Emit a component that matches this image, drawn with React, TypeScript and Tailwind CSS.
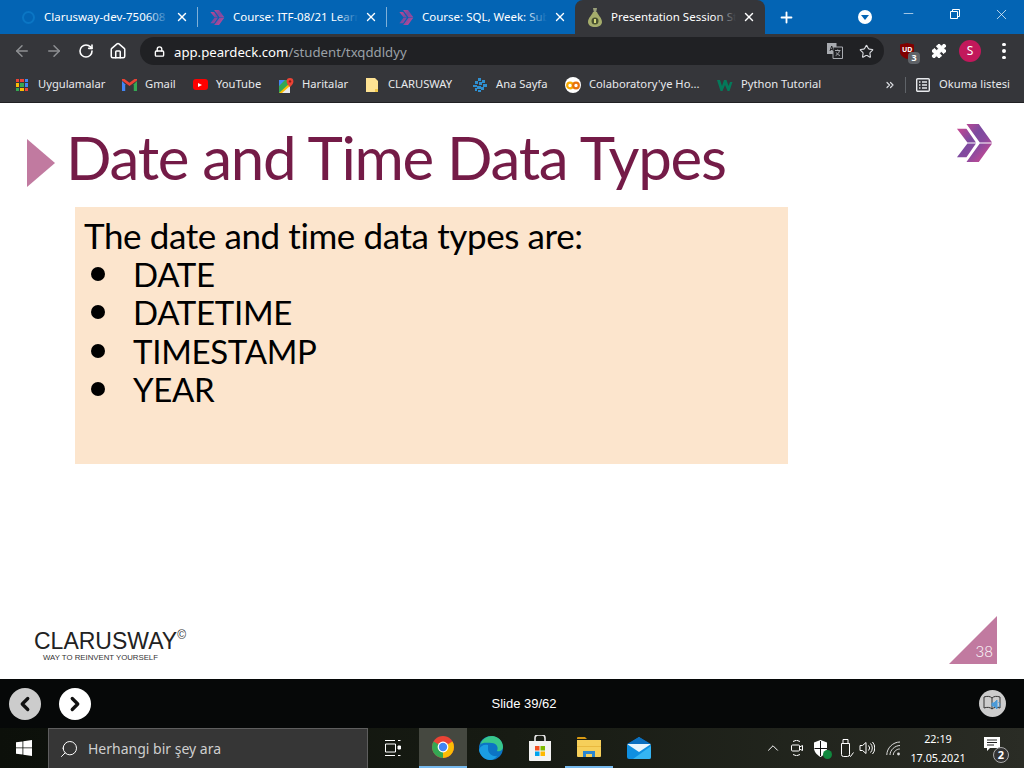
import React from "react";
import { ArrowLeft, ArrowRight, RotateCw, Home, Lock, Star, Puzzle, X, Plus, Minus, ChevronLeft, ChevronRight, ChevronUp, ChevronsRight, Search } from "lucide-react";

const ui = { fontFamily: '"Noto Sans", "Liberation Sans", sans-serif' };

function PeardeckChevron({ size = 16, id }: { size?: number; id: string }) {
  return (
    <svg width={size} height={size} viewBox="0 0 38 40">
      <defs>
        <linearGradient id={id} x1="0" y1="0" x2="1" y2="1">
          <stop offset="0" stopColor="#d6478f" />
          <stop offset="0.4" stopColor="#7b4a9f" />
          <stop offset="0.6" stopColor="#8a4a9f" />
          <stop offset="1" stopColor="#e0488c" />
        </linearGradient>
      </defs>
      <path d="M0 5h10l10 14.500H11z M0 35h10l10-14.500H11z M10 0h13l14 19.500H24z M10 40h13l14-19.500H24z" fill={`url(#${id})`} />
    </svg>
  );
}

function Tab({ title, icon, active, sep }: { title: string; icon: React.ReactNode; active?: boolean; sep?: boolean }) {
  const fade = active ? "to-[#35363a]" : "to-[#0364b4]";
  const box = active ? "-ml-[1px] w-[190px] rounded-t-lg bg-[#35363a] pl-[12px]" : "w-[189px] pl-[11px]";
  return (
    <div className={`relative flex h-[34px] shrink-0 items-center pr-[7px] text-white ${box}`}>
      <div className="flex w-[16px] justify-center">{icon}</div>
      <div className="relative ml-[8px] h-[16px] w-[125px] overflow-hidden whitespace-nowrap text-[11.500px] leading-[16px]">
        {title}
        <div className={`absolute inset-y-0 right-0 w-[22px] bg-linear-to-r from-transparent ${fade}`} />
      </div>
      <X size={14} strokeWidth={2.400} className="ml-[6px] shrink-0" />
      {sep && <div className="absolute right-0 top-[7px] h-[20px] w-px bg-[#7fb0d8]" />}
    </div>
  );
}

function Bookmark({ icon, label, w }: { icon: React.ReactNode; label: string; w: string }) {
  return (
    <div className={`flex shrink-0 items-center ${w}`}>
      <div className="flex w-[16px] shrink-0 justify-center">{icon}</div>
      <span className="ml-[8px] mt-[-2px] whitespace-nowrap text-[11.200px] text-[#e8eaed]">{label}</span>
    </div>
  );
}

function AppsIcon() {
  const c = ["#ea4335", "#ea4335", "#4285f4", "#fbbc05", "#34a853", "#4285f4", "#34a853", "#fbbc05", "#ea4335"];
  return (
    <div className="grid grid-cols-3 gap-[1px]">
      {c.map((x, i) => (
        <div key={i} className="h-[3.600px] w-[3.600px]" style={{ background: x }} />
      ))}
    </div>
  );
}

function GmailIcon() {
  return (
    <svg width="15" height="12" viewBox="0 0 15 12">
      <path d="M0 2v10h3.200V5.200z" fill="#4285f4" />
      <path d="M15 2v10h-3.200V5.200z" fill="#34a853" />
      <path d="M0 1.500 7.500 7 15 1.500V0h-2.500L7.500 3.700 2.500 0H0z" fill="#ea4335" />
    </svg>
  );
}

function YoutubeIcon() {
  return (
    <div className="flex h-[11px] w-[15px] items-center justify-center rounded-[3px] bg-[#f00]">
      <div className="h-0 w-0 border-y-[2.500px] border-l-[4px] border-y-transparent border-l-white" />
    </div>
  );
}

function MapsIcon() {
  return (
    <svg width="15" height="15" viewBox="0 0 15 15">
      <path d="M0 2h11v13H0z" fill="#34a853" />
      <path d="M0 15 11 5v10z" fill="#fbbc05" />
      <path d="M3 15 11 8v7z" fill="#e8eaed" />
      <path d="M0 2h6L0 8z" fill="#4285f4" />
      <path d="M11 0a3.400 3.400 0 0 1 3.400 3.400C14.400 6 11 9 11 9S7.600 6 7.600 3.400A3.400 3.400 0 0 1 11 0z" fill="#ea4335" />
      <circle cx="11" cy="3.400" r="1.200" fill="#8a1c14" />
    </svg>
  );
}

function FolderPage() {
  return (
    <svg width="12" height="14" viewBox="0 0 12 14">
      <path d="M0 0h9l3 3v11H0z" fill="#fde293" />
      <path d="M9 11h3v3H9z" fill="#f2c94c" />
    </svg>
  );
}

function Splash() {
  return (
    <svg width="16" height="16" viewBox="0 0 16 16" fill="#2f8fd0">
      <path d="M6 1h3v3H6zM10 3h3v3h-3zM3 4h3v3H3zM7 5h3v3H7zM11 7h4v3h-4zM1 8h4v2H1zM5 9h4v3H5zM9 10h3v3H9zM3 11h2v3H3zM6 13h3v2H6z" />
    </svg>
  );
}

function ColabIcon() {
  return (
    <div className="relative flex h-[16px] w-[16px] items-center justify-center rounded-full bg-white">
      <svg width="14" height="9" viewBox="0 0 14 9" fill="none" stroke="#f9ab00" strokeWidth="2.200">
        <circle cx="4" cy="4.500" r="2.800" />
        <circle cx="10" cy="4.500" r="2.800" stroke="#e8710a" />
      </svg>
    </div>
  );
}

function W3Icon() {
  return (
    <svg width="16" height="12" viewBox="0 0 16 12">
      <path d="M0 1h3l2 6 2-6h2.500l2 6L13 3h2.500l-3 9h-2L8 6l-2.500 6h-2z" fill="#04795a" />
    </svg>
  );
}

function PearTabIcon() {
  return (
    <svg width="14" height="19" viewBox="0 0 14 19">
      <path d="M5 0h4l-1 5H6z" fill="#9aa07a" />
      <path d="M5 4h4c1 3 5 6 5 10 0 3-3 5-7 5s-7-2-7-5c0-4 4-7 5-10z" fill="#a5ad6c" />
      <circle cx="7" cy="13" r="3.500" fill="#4a5231" />
      <path d="M6 11h2v4H6z" fill="#d4d97c" />
    </svg>
  );
}

function CircleIcon() {
  return <div className="h-[13px] w-[13px] rounded-full border-[2.500px] border-[#0b76c4]" />;
}

function ListIcon() {
  return (
    <svg width="14" height="14" viewBox="0 0 14 14" fill="none" stroke="#e8eaed" strokeWidth="1.400">
      <rect x=".7" y=".7" width="12.600" height="12.600" rx="1" />
      <path d="M3 4h1.500M6 4h5M3 7h1.500M6 7h5M3 10h1.500M6 10h5" />
    </svg>
  );
}

function TranslateIcon() {
  return (
    <svg width="16" height="16" viewBox="0 0 16 16">
      <path d="M0 0h9.500v11H0z" fill="#a8abb0" />
      <path d="M6 4h9.500v11.500H6z" fill="#202124" stroke="#a8abb0" />
      <path d="M3 8l1.700-5 1.700 5M3.600 6.500h2.200" stroke="#202124" fill="none" />
      <path d="M8 7.500h5.500M10.700 6.500v1M12.500 7.500c-.5 2.500-2 4-3.800 5M9.300 9.500c.6 1.300 2 2.500 3.700 3" stroke="#a8abb0" fill="none" />
    </svg>
  );
}

function ChromeIcon() {
  return (
    <svg width="24" height="24" viewBox="0 0 24 24">
      <circle cx="12" cy="12" r="11" fill="#ea4335" />
      <path d="M12 12 21.500 6.500A11 11 0 0 1 12 23z" fill="#fbbc05" />
      <path d="M12 12 12 23A11 11 0 0 1 2.500 6.500z" fill="#34a853" />
      <circle cx="12" cy="12" r="5.400" fill="#fff" />
      <circle cx="12" cy="12" r="4.200" fill="#4285f4" />
    </svg>
  );
}

function EdgeIcon() {
  return (
    <svg width="24" height="24" viewBox="0 0 24 24">
      <circle cx="12" cy="12" r="12" fill="#0c74c4" />
      <path d="M1 9C3 3 8 0 13 0c6 0 11 5 11 11 0 3-3 5-6 4 2-4-1-8-5-8C8 7 3 6 1 9z" fill="#38c78b" />
      <path d="M9 13c0 4 4 8 9 7-2 2.500-4 4-7 4C6 24 1 20 0 14c1-4 5-6 9-5z" fill="#1b9de2" />
    </svg>
  );
}

function StoreIcon() {
  return (
    <svg width="24" height="26" viewBox="0 0 24 26">
      <path d="M7 6V3a3 3 0 0 1 3-3h4a3 3 0 0 1 3 3v3" fill="none" stroke="#e8e8e8" strokeWidth="1.600" />
      <path d="M1 6h22v19a1 1 0 0 1-1 1H2a1 1 0 0 1-1-1z" fill="#f3f3f3" />
      <path d="M7 11h4.500v4.500H7z" fill="#f25022" />
      <path d="M12.500 11H17v4.500h-4.500z" fill="#7fba00" />
      <path d="M7 16.500h4.500V21H7z" fill="#00a4ef" />
      <path d="M12.500 16.500H17V21h-4.500z" fill="#ffb900" />
    </svg>
  );
}

function FolderIcon() {
  return (
    <svg width="24" height="20" viewBox="0 0 24 20">
      <path d="M0 1a1 1 0 0 1 1-1h7l2 2H0z" fill="#d99a13" />
      <path d="M0 3h24v16a1 1 0 0 1-1 1H1a1 1 0 0 1-1-1z" fill="#f6cf5a" />
      <path d="M0 9h24v1H0z" fill="#e9b93f" />
      <path d="M6 14h12v6h-3v-3H9v3H6z" fill="#2b86d0" />
    </svg>
  );
}

function MailIcon() {
  return (
    <svg width="24" height="22" viewBox="0 0 24 22">
      <path d="M12 0 24 8v12a2 2 0 0 1-2 2H2a2 2 0 0 1-2-2V8z" fill="#0f8fe0" />
      <path d="M0 7h24l-12 8z" fill="#e7f5fd" />
      <path d="M12 0 24 7H0z" fill="#0a6fc0" />
      <path d="M24 9v11a2 2 0 0 1-2 2H6z" fill="#35b4f2" />
    </svg>
  );
}

function TrayIcons() {
  return (
    <div className="flex items-center text-white">
      <ChevronUp size={18} strokeWidth={1.300} />
      <svg className="ml-[8px]" width="14" height="16" viewBox="0 0 14 16" fill="none" stroke="#fff" strokeWidth="1">
        <path d="M3 1.500a6 6 0 0 1 7 0M3 14.500a6 6 0 0 0 7 0" />
        <rect x="1.500" y="5" width="8" height="6" rx="1" />
        <path d="m9.500 7 3-1.500v5l-3-1.500" />
      </svg>
      <div className="relative ml-[9px] h-[17px] w-[16px]">
        <svg width="15" height="17" viewBox="0 0 15 17">
          <path d="M7.500 0 14 2.500V8c0 4-3 7-6.500 9C4 15 1 12 1 8V2.500z" fill="#fff" />
          <path d="M7 1v7H1.500V9H7v7h1V9h6V8H8V1z" fill="#111" />
        </svg>
        <div className="absolute bottom-[-2px] right-[-3px] h-[9px] w-[9px] rounded-full bg-[#10893e]" />
      </div>
      <svg className="ml-[11px]" width="14" height="18" viewBox="0 0 14 18" fill="none" stroke="#fff" strokeWidth="1">
        <path d="M3 .5h5v4H3zM1.500 4.500h8v11a2 2 0 0 1-2 2h-4a2 2 0 0 1-2-2z" />
        <path d="m9 16 1.500 1.500 3-4" />
      </svg>
      <svg className="ml-[5px]" width="16" height="14" viewBox="0 0 16 14" fill="none" stroke="#fff" strokeWidth="1">
        <path d="M1 4.500h2.500L7 1.500v11l-3.500-3H1z" />
        <path d="M9.500 4.500a3.500 3.500 0 0 1 0 5M11.500 2.500a6.500 6.500 0 0 1 0 9M13.500 1a9 9 0 0 1 0 12" />
      </svg>
      <svg className="ml-[11px]" width="15" height="15" viewBox="0 0 15 15" fill="none" stroke="#ddd" strokeWidth="1">
        <path d="M.8 14C.8 7 7 1 14 1M4 14c0-5 5-9.500 10-9.500M7.300 14c0-3 3-6 6.500-6" />
        <circle cx="12.500" cy="13" r="1.400" fill="#ddd" stroke="none" />
      </svg>
    </div>
  );
}

export default function App() {
  return (
    <div className="flex h-[768px] w-[1024px] flex-col overflow-hidden bg-white" style={ui}>
      {/* Tab strip */}
      <div className="flex h-[34px] shrink-0 items-start bg-[#0364b4] pl-[9px]">
        <Tab title="Clarusway-dev-750608 - Microsoft" icon={<CircleIcon />} sep />
        <Tab title="Course: ITF-08/21 Learn SQL" icon={<PeardeckChevron size={15} id="c1" />} sep />
        <Tab title="Course: SQL, Week: Sub Queries" icon={<PeardeckChevron size={15} id="c2" />} />
        <Tab title="Presentation Session Student" icon={<PearTabIcon />} active />
        <Plus size={17} strokeWidth={2.600} className="ml-[13px] mt-[9px] shrink-0 text-white" />
        <div className="ml-[63px] mt-[10px] flex h-[14px] w-[14px] shrink-0 items-center justify-center rounded-full bg-white">
          <div className="h-0 w-0 border-x-[4px] border-t-[5px] border-x-transparent border-t-[#0364b4]" />
        </div>
        <Minus size={15} strokeWidth={1} className="ml-[29px] mt-[6px] shrink-0 text-white" />
        <svg className="ml-[34px] mt-[9px] shrink-0" width="10" height="10" viewBox="0 0 10 10" fill="none" stroke="#fff">
          <path d="M.5 2.500h7v7h-7zM2.500 2.500v-2h7v7h-2" />
        </svg>
        <X size={17} strokeWidth={1} className="ml-[33px] mt-[6px] shrink-0 text-white" />
      </div>

      {/* Address bar */}
      <div className="flex h-[34px] shrink-0 items-center bg-[#35363a] pl-[13px] text-white">
        <ArrowLeft size={18} strokeWidth={2} className="text-[#8e9093]" />
        <ArrowRight size={18} strokeWidth={2} className="ml-[14px] text-[#8e9093]" />
        <RotateCw size={16} strokeWidth={2.400} className="ml-[15px]" />
        <Home size={18} strokeWidth={2} className="ml-[15px]" />
        <div className="ml-[13px] flex h-[28px] w-[744px] items-center rounded-full bg-[#202124] pl-[14px] pr-[10px]">
          <Lock size={11} strokeWidth={3} className="text-white" />
          <div className="ml-[9px] mt-[1px] text-[13.200px] leading-[18px]">
            <span className="text-white">app.peardeck.com</span>
            <span className="text-[#9aa0a6]">/student/txqddldyy</span>
          </div>
          <div className="ml-auto flex items-center">
            <TranslateIcon />
            <Star size={15} strokeWidth={1.800} className="ml-[16px] text-[#dadce0]" />
          </div>
        </div>
        <div className="relative ml-[16px] h-[16px] w-[14px]">
          <svg width="14" height="16" viewBox="0 0 14 16">
            <path d="M0 1.500 7 0l7 1.500V9c0 3-3 5.500-7 7-4-1.500-7-4-7-7z" fill="#800000" />
          </svg>
          <span className="absolute left-[2px] top-[2px] text-[7px] font-bold leading-[9px] text-white">UD</span>
          <div className="absolute left-[8px] top-[9px] flex h-[12px] w-[12px] items-center justify-center rounded-sm bg-[#5f6368] text-[9px] font-bold text-white">3</div>
        </div>
        <Puzzle size={16} fill="#fff" strokeWidth={1.500} className="ml-[17px]" />
        <div className="ml-[12px] flex h-[22px] w-[22px] items-center justify-center rounded-full bg-[#c2185b] text-[12px] text-white">S</div>
        <div className="ml-[21px] flex flex-col gap-[3px]">
          <div className="h-[3.500px] w-[3.500px] rounded-full bg-white" />
          <div className="h-[3.500px] w-[3.500px] rounded-full bg-white" />
          <div className="h-[3.500px] w-[3.500px] rounded-full bg-white" />
        </div>
      </div>

      {/* Bookmarks */}
      <div className="flex h-[35px] shrink-0 items-center border-b border-[#202124] bg-[#35363a] pl-[14px]">
        <Bookmark icon={<AppsIcon />} label="Uygulamalar" w="w-[107px]" />
        <Bookmark icon={<GmailIcon />} label="Gmail" w="w-[71px]" />
        <Bookmark icon={<YoutubeIcon />} label="YouTube" w="w-[86px]" />
        <Bookmark icon={<MapsIcon />} label="Haritalar" w="w-[86px]" />
        <Bookmark icon={<FolderPage />} label="CLARUSWAY" w="w-[108px]" />
        <Bookmark icon={<Splash />} label="Ana Sayfa" w="w-[93px]" />
        <Bookmark icon={<ColabIcon />} label="Colaboratory'ye Ho..." w="w-[152px]" />
        <Bookmark icon={<W3Icon />} label="Python Tutorial" w="w-[167px]" />
        <ChevronsRight size={12} strokeWidth={2.400} className="text-[#dadce0]" />
        <div className="ml-[9px] h-[16px] w-px bg-[#5f6368]" />
        <div className="ml-[10px]"><ListIcon /></div>
        <span className="ml-[9px] mt-[-2px] whitespace-nowrap text-[11.200px] text-[#e8eaed]">Okuma listesi</span>
      </div>

      {/* Slide */}
      <div className="relative flex h-[576px] shrink-0 flex-col bg-white" style={{ fontFamily: '"Lato", "Noto Sans", sans-serif' }}>
        <div className="flex h-[104px] shrink-0 items-start pl-[27px] pt-[36px]">
          <div className="h-0 w-0 border-y-[24.500px] border-l-[28px] border-y-transparent border-l-[#c17aa0]" />
          <h1 className="ml-[11px] mt-[-13px] whitespace-nowrap text-[60px] font-normal leading-[62px] tracking-[-1.300px] text-[#741b47]">Date and Time Data Types</h1>
        </div>
        <div className="ml-[75px] flex h-[257px] w-[713px] flex-col bg-[#fce5cd] pl-[9px] pt-[9px] text-[35px] font-normal leading-[38.500px] text-black">
          <div className="tracking-[-0.400px]">The date and time data types are:</div>
          {["DATE", "DATETIME", "TIMESTAMP", "YEAR"].map((t) => (
            <div key={t} className="flex items-center">
              <div className="ml-[7px] h-[14px] w-[14px] rounded-full bg-black" />
              <span className="ml-[28px] text-[33px] tracking-[-0.300px]">{t}</span>
            </div>
          ))}
        </div>
        <div className="absolute right-[30px] top-[21px]">
          <PeardeckChevron size={38} id="c3" />
        </div>
        <div className="absolute bottom-[16px] left-[34px]" style={{ fontFamily: '"Liberation Sans", sans-serif' }}>
          <div className="flex items-start">
            <span className="text-[23px] leading-[24px] text-[#222]">CLARUSWAY</span>
            <span className="mt-[-2px] text-[12px] leading-[16px] text-[#333]">©</span>
          </div>
          <div className="ml-[9px] text-[7.800px] leading-[10px] text-[#333]">WAY TO REINVENT YOURSELF</div>
        </div>
        <div className="absolute bottom-[15px] right-[27px] h-[48px] w-[48px] bg-[#c17aa0] [clip-path:polygon(100%_0,100%_100%,0_100%)]">
          <span className="absolute bottom-[5px] right-[4px] text-[15px] font-light leading-[16px] text-white">38</span>
        </div>
      </div>

      {/* Presenter bar */}
      <div className="flex h-[49px] shrink-0 items-center bg-[#060808] pl-[9px] pr-[18px]">
        <div className="flex h-[32px] w-[32px] items-center justify-center rounded-full bg-[#cccccc]">
          <ChevronLeft size={22} strokeWidth={3.600} className="text-[#111]" />
        </div>
        <div className="ml-[18px] flex h-[32px] w-[32px] items-center justify-center rounded-full bg-white">
          <ChevronRight size={22} strokeWidth={3.600} className="text-[#111]" />
        </div>
        <div className="ml-[400px] w-[66px] whitespace-nowrap text-center text-[13px] text-white" style={{ fontFamily: '"Liberation Sans", sans-serif' }}>Slide 39/62</div>
        <div className="ml-auto mt-[-1px] flex h-[27px] w-[27px] items-center justify-center rounded-full bg-[#cccccc]">
          <svg width="19" height="19" viewBox="0 0 19 19" fill="none" stroke="#333" strokeWidth="1">
            <path d="M1 3c3-1 6-1 8 1 2-2 5-2 8-1v11c-3-1-6-1-8 1-2-2-5-2-8-1zM9 4v11" />
            <path d="M9 9h2l3-3v9l-3-3H9z" fill="#4b9ad8" stroke="#4b9ad8" />
            <path d="M15.500 8a3 3 0 0 1 0 5" stroke="#4b9ad8" />
          </svg>
        </div>
      </div>

      {/* Taskbar */}
      <div className="flex h-[40px] shrink-0 items-center bg-linear-to-r from-[#0c100a] via-[#171b13] to-[#2a2c25]">
        <div className="flex w-[48px] justify-center">
          <svg width="16" height="16" viewBox="0 0 16 16" fill="#fff">
            <path d="M0 2.300 6.500 1.400V7.500H0zM7.300 1.300 16 0v7.500H7.300zM0 8.300h6.500v6.300L0 13.700zM7.300 8.300H16V16l-8.700-1.200z" />
          </svg>
        </div>
        <div className="flex h-[40px] w-[320px] items-center border border-b-0 border-[#5e5e5e] bg-[#363636] pl-[10px]">
          <Search size={20} strokeWidth={1.200} className="-scale-x-100 text-white" />
          <span className="ml-[9px] text-[14px] text-[#cfcfcf]">Herhangi bir şey ara</span>
        </div>
        <div className="flex w-[49px] justify-center">
          <svg width="16" height="16" viewBox="0 0 16 16" fill="none" stroke="#fff">
            <path d="M0 .5h10M0 15.500h10M.5 4h10v8H.5zM13 .5h2.500M13 15.500h2.500" />
            <path d="M13 6h2.500v3H13z" fill="#fff" />
          </svg>
        </div>
        <div className="ml-[2px] flex h-[40px] w-[48px] items-center justify-center border-b-[2px] border-[#76b9ed] bg-[#454840]">
          <ChromeIcon />
        </div>
        <div className="flex w-[48px] justify-center"><EdgeIcon /></div>
        <div className="flex w-[50px] justify-center"><StoreIcon /></div>
        <div className="flex h-[40px] w-[48px] items-center justify-center border-b-[2px] border-[#76b9ed]"><FolderIcon /></div>
        <div className="ml-[2px] flex w-[48px] justify-center"><MailIcon /></div>
        <div className="ml-[101px]"><TrayIcons /></div>
        <div className="ml-[2px] mt-[-1px] w-[70px] text-center text-[10.800px] leading-[19px] text-white">
          <div>22:19</div>
          <div>17.05.2021</div>
        </div>
        <div className="relative ml-[7px] h-[24px] w-[24px]">
          <svg className="absolute left-[4px] top-[1px]" width="16" height="15" viewBox="0 0 16 15">
            <path d="M0 0h16v11H6l-3 3v-3H0z" fill="#fff" />
            <path d="M3 3h10M3 5.500h10M3 8h7" stroke="#222" />
          </svg>
          <div className="absolute bottom-[-3px] right-[-5px] flex h-[16px] w-[16px] items-center justify-center rounded-full border border-[#aaa] bg-[#333] text-[11px] font-bold text-white">2</div>
        </div>
      </div>
    </div>
  );
}
